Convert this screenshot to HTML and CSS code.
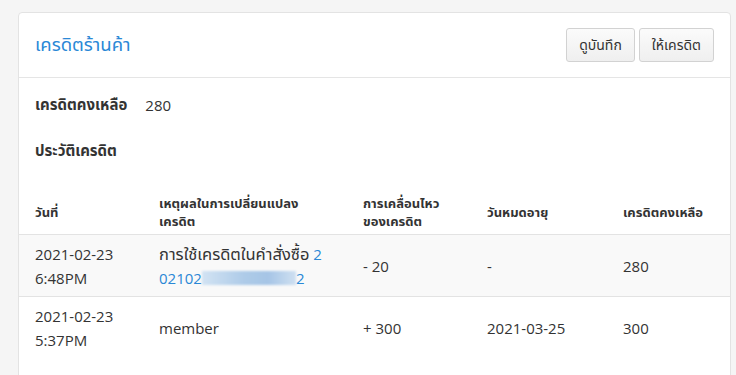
FILE: index.html
```html
<!DOCTYPE html>
<html lang="th">
<head>
  <meta charset="UTF-8">
  <meta name="viewport" content="width=device-width, initial-scale=1.0">
  <title>เครดิตร้านค้า</title>
  <link rel="stylesheet" href="styles.css">
</head>
<body>

  <div class="card">
    <div class="card-header">
      <h2 class="card-title">เครดิตร้านค้า</h2>
      <div class="actions">
        <button class="btn">ดูบันทึก</button>
        <button class="btn">ให้เครดิต</button>
      </div>
    </div>

    <div class="summary">
      <span class="summary-label">เครดิตคงเหลือ</span>
      <span class="summary-value">280</span>
    </div>

    <h3 class="section-title">ประวัติเครดิต</h3>

    <table class="history">
      <colgroup>
        <col class="col-date">
        <col class="col-reason">
        <col class="col-change">
        <col class="col-expire">
        <col class="col-balance">
      </colgroup>
      <thead>
        <tr>
          <th>วันที่</th>
          <th>เหตุผลในการเปลี่ยนแปลง<br>เครดิต</th>
          <th>การเคลื่อนไหว<br>ของเครดิต</th>
          <th>วันหมดอายุ</th>
          <th>เครดิตคงเหลือ</th>
        </tr>
      </thead>
      <tbody>
        <tr class="striped">
          <td>2021-02-23<br>6:48PM</td>
          <td><span class="th">การใช้เครดิตในคำสั่งซื้อ</span> <a href="#" class="order-link">2<br>02102<span class="masked"></span>2</a></td>
          <td>- 20</td>
          <td>-</td>
          <td>280</td>
        </tr>
        <tr>
          <td>2021-02-23<br>5:37PM</td>
          <td>member</td>
          <td>+ 300</td>
          <td>2021-03-25</td>
          <td>300</td>
        </tr>
      </tbody>
    </table>
  </div>

</body>
</html>
```

FILE: styles.css
```css
/* Page */
body {
  margin: 0;
  background-color: #f5f5f5;
  font-family: "Open Sans", "Noto Sans", "Noto Sans Thai", sans-serif;
  color: #333;
}

.card {
  margin: 12px 5px 0 18px;
  background-color: #fff;
  border: 1px solid #e3e3e3;
  border-radius: 4px 4px 0 0;
  min-height: 380px;
}

.card-header {
  display: flex;
  justify-content: space-between;
  align-items: center;
  padding: 15px 16px 15px 16px;
  border-bottom: 1px solid #e5e5e5;
}

.card-title {
  margin: 0;
  font-size: 18.5px;
  font-weight: normal;
  color: #2a88d6;
}

.actions {
  display: flex;
  gap: 4px;
}

.btn {
  height: 34px;
  padding: 0 12px;
  font-family: inherit;
  font-size: 14px;
  color: #333;
  background: linear-gradient(#fbfbfb, #efefef);
  border: 1px solid #d2d2d2;
  border-radius: 3px;
  cursor: pointer;
}

.summary {
  display: flex;
  align-items: center;
  gap: 18px;
  padding: 15px 16px 0 16px;
  height: 24px;
}

.summary-label {
  font-size: 15px;
  font-weight: bold;
}

.summary-value {
  font-size: 15px;
}

.section-title {
  margin: 0;
  padding: 21px 16px 0 16px;
  font-size: 15px;
  height: 28px;
  line-height: 24px;
}

.history {
  width: 100%;
  margin-top: 20px;
  border-collapse: collapse;
  table-layout: fixed;
}

.col-date { width: 124px; }
.col-reason { width: 204px; }
.col-change { width: 124px; }
.col-expire { width: 136px; }

.history th {
  text-align: left;
  font-size: 13px;
  font-weight: bold;
  line-height: 18px;
  padding: 8px 16px 4px 16px;
  height: 35px;
  vertical-align: middle;
  border-bottom: 1px solid #e3e3e3;
}

.history td {
  font-size: 15px;
  line-height: 24px;
  padding: 7px 16px 6px 16px;
  height: 48px;
  vertical-align: middle;
  border-bottom: 1px solid #e3e3e3;
}

.history tbody tr:last-child td {
  border-bottom: none;
}

.striped td {
  background-color: #f9f9f9;
}

.th {
  font-size: 16.5px;
}

.order-link {
  color: #2a88d6;
  text-decoration: none;
}

.masked {
  display: inline-block;
  width: 94px;
  height: 14px;
  vertical-align: -1px;
  background: linear-gradient(90deg, #d2e3f3, #aecbe8 45%, #a6c5e6 70%, #cfe0f1);
  filter: blur(1px);
}
```
